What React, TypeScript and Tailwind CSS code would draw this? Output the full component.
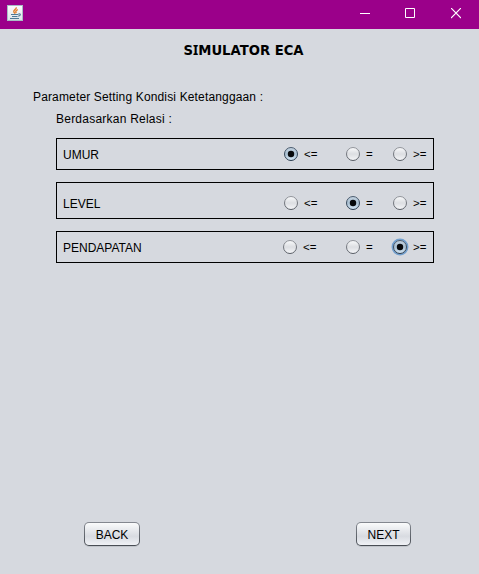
import React from "react";

type RadioProps = {
  group: string;
  label: string;
  checked?: boolean;
  focused?: boolean;
  shifted?: boolean;
};

function Radio({ group, label, checked = false, focused = false, shifted = false }: RadioProps) {
  const id = `${group}-${checked ? "on" : "off"}`;
  return (
    <label className={`flex h-[18px] items-center ${shifted ? "-ml-px" : ""}`}>
      <svg className="-ml-[2px] h-[18px] w-[18px] shrink-0" viewBox="0 0 18 18">
        <defs>
          <linearGradient id={id} x1="0" y1="0" x2="0" y2="1">
            <stop offset="0" stopColor={checked ? "#c3d2e0" : "#fafbfc"} />
            <stop offset="0.5" stopColor={checked ? "#a9bfd1" : "#dcdee2"} />
            <stop offset="1" stopColor={checked ? "#d6e8f6" : "#f6f7f9"} />
          </linearGradient>
          <linearGradient id={`${id}-rim`} x1="0" y1="0" x2="0" y2="1">
            <stop offset="0" stopColor={checked ? "#4c5d70" : "#92959b"} />
            <stop offset="1" stopColor={checked ? "#26384a" : "#565b63"} />
          </linearGradient>
        </defs>
        {focused && <circle cx="9" cy="9" r="7.6" fill="none" stroke="#719fce" strokeWidth="1.7" />}
        <circle cx="9" cy="9" r="6.5" fill={`url(#${id})`} stroke={`url(#${id}-rim)`} />
        {checked && <circle cx="9" cy="9" r="3.2" fill="#07090b" />}
      </svg>
      <span className="ml-[4px] text-[11.5px] leading-[14px]">{label}</span>
    </label>
  );
}

type RowProps = { name: string; selected: number; className: string; focused?: boolean; nameClass?: string };

function RelationRow({ name, selected, className, focused = false, nameClass = "" }: RowProps) {
  return (
    <div
      className={`grid w-[378px] grid-cols-[227px_62px_47px_40px] items-center border border-black ${className}`}
    >
      <span className={`pl-[6px] leading-[14px] ${nameClass}`}>{name}</span>
      {["<=", "=", ">="].map((label, i) => (
        <Radio
          key={label}
          group={name}
          label={label}
          checked={selected === i}
          focused={focused && selected === i}
          shifted={focused && i === 0}
        />
      ))}
    </div>
  );
}

function JavaIcon() {
  return (
    <svg className="h-4 w-4" viewBox="0 0 16 16" fill="none">
      <defs>
        <linearGradient id="java-bg" x1="0" y1="0" x2="0" y2="1">
          <stop offset="0" stopColor="#fdfdfd" />
          <stop offset="1" stopColor="#dce4e9" />
        </linearGradient>
      </defs>
      <rect x="0.5" y="0.5" width="15" height="15" fill="url(#java-bg)" stroke="#a9bdc6" />
      <path d="M9.3 2.3C9.6 4.4 5.9 5 6.8 7L8 8.6M10.8 4.6C8.6 5.6 8.3 6.6 9.3 8.2" stroke="#e2812f" strokeWidth="1.4" />
      <path d="M4 9.5h7.5M5 11.5h5.5M3 13.5h9" stroke="#4f7996" strokeWidth="1.1" />
      <path d="M11.5 8.8c2.6-.5 2.4 2-.3 2.3" stroke="#4f7996" strokeWidth="1.1" />
    </svg>
  );
}

function TitleBar() {
  return (
    <header className="flex h-[29px] items-start justify-between bg-[#9b008a] pl-[7px] text-white">
      <div className="pt-[5px]">
        <JavaIcon />
      </div>
      <div className="flex gap-[35px] pt-[8px] pr-[18px]">
        <svg className="h-[11px] w-[10px]" viewBox="0 0 10 11" fill="currentColor">
          <path d="M0 5h10v1H0z" />
        </svg>
        <svg className="h-[11px] w-[10px]" viewBox="0 0 10 11" fill="none" stroke="currentColor">
          <path d="M.5.5h9v9h-9z" />
        </svg>
        <svg className="ml-px h-[11px] w-[10px]" viewBox="0 0 10 11" fill="none" stroke="currentColor" strokeWidth="1.2">
          <path d="M0 0l10 10M10 0L0 10" />
        </svg>
      </div>
    </header>
  );
}

function Button({ children, className }: { children: React.ReactNode; className: string }) {
  return (
    <button
      className={`h-6 rounded-[5px] bg-linear-to-b from-[#858991] to-[#484d54] p-px shadow-[0_1px_0_#c0c4ca] ${className}`}
    >
      <span className="flex h-full items-center justify-center rounded-[4px] bg-linear-to-b from-[#fafbfc] via-[#d8dbe1] via-60% to-[#f0f2f6] pt-px leading-[14px]">
        {children}
      </span>
    </button>
  );
}

export default function App() {
  return (
    <div className="flex h-[574px] w-[479px] flex-col overflow-hidden bg-[#d6d9df] font-['Liberation_Sans',Arial,sans-serif] text-[12px] text-black">
      <TitleBar />
      <main className="flex flex-1 flex-col">
        <h1 className="mt-[12px] h-[18px] pl-[183.5px] font-['DejaVu_Sans',sans-serif] text-[13.2px] leading-[18px] font-bold whitespace-nowrap">
          S
          <span className="font-['Noto_Sans',sans-serif] text-[13.5px]">I</span>
          MULATOR ECA
        </h1>
        <p className="mt-[31px] pl-[33px] leading-[14px] tracking-[0.15px] whitespace-nowrap">
          Parameter Setting Kondisi Ketetanggaan :
        </p>
        <p className="mt-[8px] pl-[56px] leading-[14px] tracking-[0.23px] whitespace-nowrap">Berdasarkan Relasi :</p>
        <section className="mt-[12px] ml-[56px] flex flex-col">
          <RelationRow name="UMUR" selected={0} className="h-[32px]" nameClass="pt-px" />
          <RelationRow name="LEVEL" selected={1} className="mt-[12px] h-[37px] pt-[5px]" nameClass="pt-[2px]" />
          <RelationRow name="PENDAPATAN" selected={2} className="mt-[12px] h-[32px]" nameClass="pt-px" focused />
        </section>
        <footer className="mt-auto mb-[28px] flex gap-[216px] pl-[84px]">
          <Button className="w-[56px]">BACK</Button>
          <Button className="w-[55px]">NEXT</Button>
        </footer>
      </main>
    </div>
  );
}
